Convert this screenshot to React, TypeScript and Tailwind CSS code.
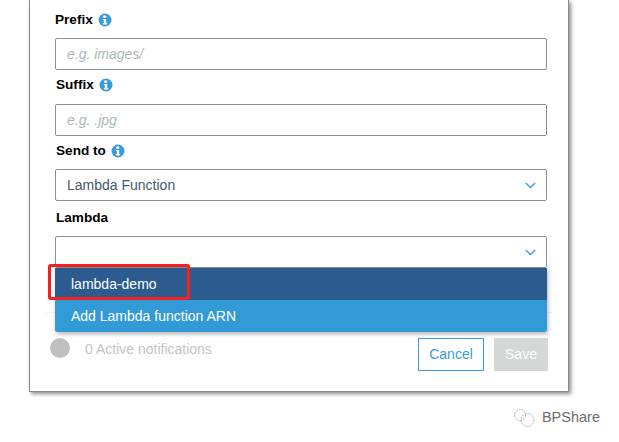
import React from "react";

const Info = () => (
  <svg width="14" height="14" viewBox="0 0 14 14" className="shrink-0">
    <circle cx="7" cy="7" r="6.5" fill="#3a9bd9" />
    <rect x="5.2" y="2.6" width="3" height="2.2" rx="0.6" fill="#fff" />
    <path d="M4.9 6h3.3v4h1v1.4H4.9V10h1V7.3h-1z" fill="#fff" />
  </svg>
);

const Chevron = () => (
  <svg width="11" height="7" viewBox="0 0 11 7" fill="none" className="shrink-0">
    <path d="M0.8 1l4.7 4.6L10.2 1" stroke="#3f9fdc" strokeWidth="1.4" />
  </svg>
);

const Label = ({ text, h, info = true }: { text: string; h: string; info?: boolean }) => (
  <div className={`flex items-center gap-[5px] text-[13.6px] font-bold text-black ${h}`}>
    <span>{text}</span>
    {info && <Info />}
  </div>
);

const Placeholder = ({ text }: { text: string }) => (
  <div className="flex h-8 items-center rounded-[2px] border border-[#879196] bg-white px-[11px] text-sm italic text-[#aab7b8]">
    {text}
  </div>
);

export default function App() {
  return (
    <div
      className="relative h-[442px] w-[619px] overflow-hidden bg-white"
      style={{ fontFamily: '"Liberation Sans", Arial, sans-serif' }}
    >
      <div className="ml-[29px] h-[392px] w-[540px] border-x border-b border-x-[#8a8a8a] border-b-[#8a8a8a] bg-white pl-[25px] pr-[21px] pt-[10px] shadow-[2px_2px_4px_rgba(0,0,0,0.45)]">
        <Label text="Prefix" h="h-[20px] mb-[8px]" />
        <Placeholder text="e.g. images/" />
        <div className="pl-px">
          <Label text="Suffix" h="h-[20px] mt-[5px] mb-[9px]" />
        </div>
        <Placeholder text="e.g. .jpg" />
        <div className="pl-px">
          <Label text="Send to" h="h-[20px] mt-[5px] mb-[8px]" />
        </div>
        <div className="flex h-8 items-center justify-between rounded-[2px] border border-[#879196] bg-white pl-[11px] pr-[10px] text-sm text-[#44596b]">
          <span>Lambda Function</span>
          <Chevron />
        </div>
        <div className="pl-px">
          <Label text="Lambda" h="h-[20px] mt-[7px] mb-[8px]" info={false} />
        </div>
        <div className="flex h-8 items-center justify-end rounded-[2px] border border-[#879196] bg-white pr-[10px]">
          <Chevron />
        </div>
        <div className="relative h-0">
          <div className="absolute left-[-9px] right-[-5px] top-[44px] h-px bg-[#f3f3f3]" />
        </div>
        <div className="relative z-10 w-[492px] overflow-hidden rounded-b-[2px] text-sm text-white shadow-[1px_2px_4px_rgba(0,0,0,0.3)]">
          <div className="flex h-8 items-center bg-[#2b5b8f] pl-[16px]">lambda-demo</div>
          <div className="flex h-8 items-center bg-[#329ad6] pl-[16px]">Add Lambda function ARN</div>
        </div>
        <div className="mt-[6px] flex items-start justify-between">
          <div className="-ml-[5px] flex h-[22px] items-center gap-[15px] text-sm text-[#c4c4c4]">
            <span className="-mt-[2px] h-5 w-5 rounded-full bg-[#bfbfbf]" />
            <span>0 Active notifications</span>
          </div>
          <div className="-mr-px flex gap-[10px] text-sm">
            <div className="flex h-[33px] w-[66px] items-center justify-center border border-[#3a9bd9] pb-[2px] text-[#3a9bd9]">Cancel</div>
            <div className="flex h-[33px] w-[54px] items-center justify-center bg-[#d5d6d6] pb-[2px] text-white">Save</div>
          </div>
        </div>
      </div>
      <div className="mt-[16px] flex h-[20px] items-center justify-end gap-[7px] pr-[19px] text-[14.5px] text-[#6b6b6b]">
        <svg width="22" height="20" viewBox="0 0 22 20" fill="none" stroke="#a5a5a5" strokeWidth="0.9" strokeDasharray="2 1">
          <circle cx="7" cy="7" r="5.5" />
          <circle cx="14.5" cy="12" r="6.5" />
        </svg>
        <span>BPShare</span>
      </div>
      <div className="pointer-events-none absolute left-[48px] top-[264px] z-20 h-[36px] w-[142px] rounded-[3px] border-[3px] border-[#f5201c]" />
    </div>
  );
}
